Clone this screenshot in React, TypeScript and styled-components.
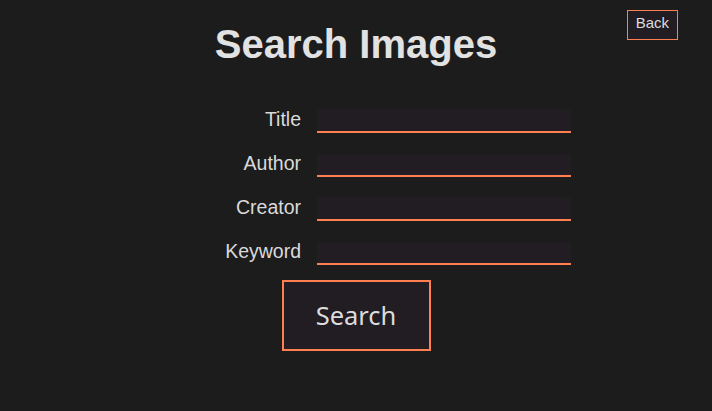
import styled, { createGlobalStyle } from 'styled-components'

const GlobalStyle = createGlobalStyle`
  html, body {
    margin: 0;
    padding: 0;
    background: #1c1c1c;
  }
  body {
    font-family: 'Liberation Sans', Arial, sans-serif;
    color: #e0e0e0;
  }
`

const fields = ['Title', 'Author', 'Creator', 'Keyword']

export default function App() {
  return (
    <>
      <GlobalStyle />
      <Page>
        <Header>
          <span />
          <Title>Search Images</Title>
          <BackButton>Back</BackButton>
        </Header>
        <Form onSubmit={(e) => e.preventDefault()}>
          <FieldGrid>
            {fields.map((field) => (
              <Row key={field}>
                <Label htmlFor={field}>{field}</Label>
                <Input id={field} type="text" />
              </Row>
            ))}
          </FieldGrid>
          <SearchButton type="submit">Search</SearchButton>
        </Form>
      </Page>
    </>
  )
}

const Page = styled.div`
  width: 712px;
  height: 411px;
  box-sizing: border-box;
  padding-top: 10px;
  display: flex;
  flex-direction: column;
  align-items: center;
`

const Header = styled.header`
  width: 100%;
  display: grid;
  grid-template-columns: 1fr auto 1fr;
  align-items: start;
`

const Title = styled.h1`
  margin: 11px 0 0;
  font-size: 40px;
  line-height: 46px;
  font-weight: bold;
  color: #e2e2e2;
`

const BackButton = styled.button`
  justify-self: end;
  margin-right: 34px;
  height: 30px;
  box-sizing: border-box;
  padding: 3px 8px 7px;
  display: flex;
  align-items: flex-start;
  background: #211d23;
  border: 1px solid #ff7f50;
  color: #dcdcdc;
  font-family: 'Liberation Sans', Arial, sans-serif;
  font-size: 15px;
  line-height: 17px;
  cursor: pointer;
`

const Form = styled.form`
  margin-top: 43px;
  display: flex;
  flex-direction: column;
  align-items: center;
`

const FieldGrid = styled.div`
  display: flex;
  flex-direction: column;
  gap: 21px;
`

const Row = styled.div`
  display: grid;
  grid-template-columns: 160px 254px;
  column-gap: 16px;
  align-items: start;
`

const Label = styled.label`
  text-align: right;
  font-size: 19.5px;
  line-height: 18px;
  color: #dadada;
`

const Input = styled.input`
  box-sizing: border-box;
  width: 254px;
  height: 23px;
  background: #211d23;
  border: none;
  border-bottom: 2px solid #ff7f50;
  color: #e0e0e0;
  outline: none;
  padding: 0 4px;
`

const SearchButton = styled.button`
  margin-top: 15px;
  width: 149px;
  height: 71px;
  box-sizing: border-box;
  padding: 0 0 2px;
  background: #211d23;
  border: 2px solid #ff7f50;
  color: #dcdcdc;
  font-family: 'Noto Sans', 'Open Sans', sans-serif;
  font-size: 25.5px;
  cursor: pointer;
`
